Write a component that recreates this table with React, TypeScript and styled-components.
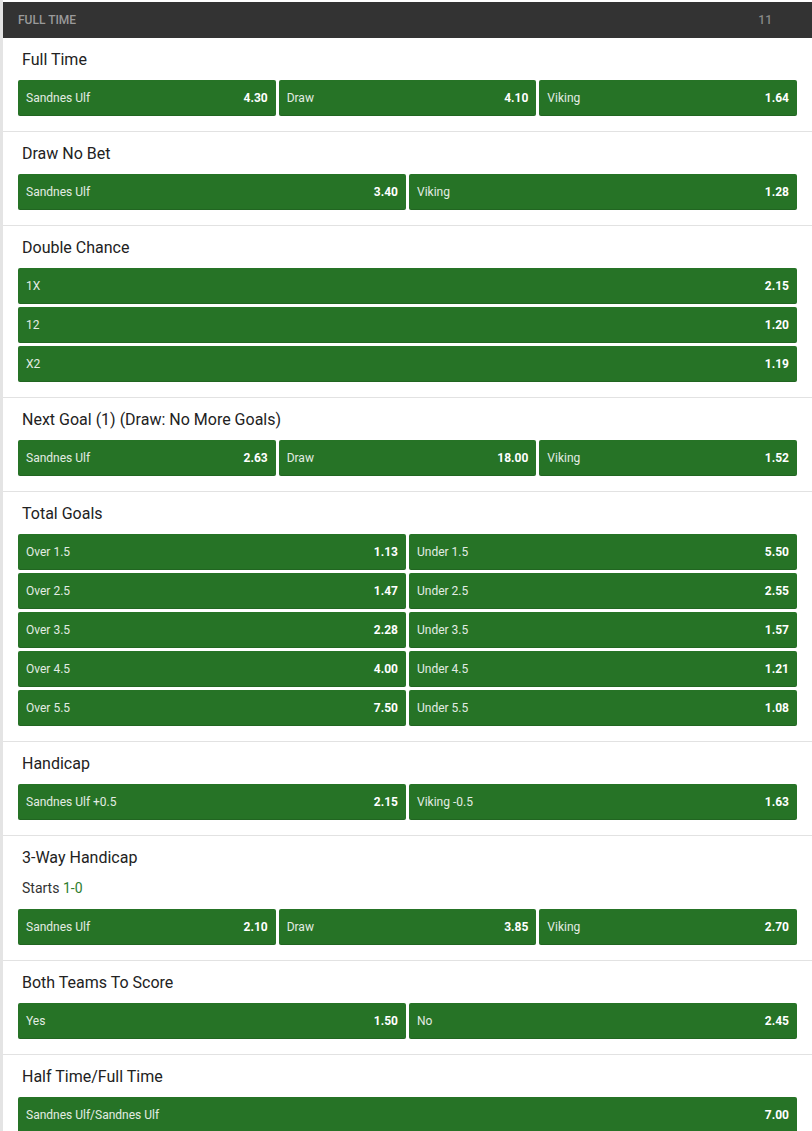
import styled, { createGlobalStyle } from 'styled-components';

type Outcome = { label: string; odds: string };

interface Market {
	title: string;
	note?: { text: string; value: string };
	columns: number;
	outcomes: Outcome[];
}

const markets: Market[] = [
	{
		title: 'Full Time',
		columns: 3,
		outcomes: [
			{ label: 'Sandnes Ulf', odds: '4.30' },
			{ label: 'Draw', odds: '4.10' },
			{ label: 'Viking', odds: '1.64' },
		],
	},
	{
		title: 'Draw No Bet',
		columns: 2,
		outcomes: [
			{ label: 'Sandnes Ulf', odds: '3.40' },
			{ label: 'Viking', odds: '1.28' },
		],
	},
	{
		title: 'Double Chance',
		columns: 1,
		outcomes: [
			{ label: '1X', odds: '2.15' },
			{ label: '12', odds: '1.20' },
			{ label: 'X2', odds: '1.19' },
		],
	},
	{
		title: 'Next Goal (1) (Draw: No More Goals)',
		columns: 3,
		outcomes: [
			{ label: 'Sandnes Ulf', odds: '2.63' },
			{ label: 'Draw', odds: '18.00' },
			{ label: 'Viking', odds: '1.52' },
		],
	},
	{
		title: 'Total Goals',
		columns: 2,
		outcomes: [
			{ label: 'Over 1.5', odds: '1.13' },
			{ label: 'Under 1.5', odds: '5.50' },
			{ label: 'Over 2.5', odds: '1.47' },
			{ label: 'Under 2.5', odds: '2.55' },
			{ label: 'Over 3.5', odds: '2.28' },
			{ label: 'Under 3.5', odds: '1.57' },
			{ label: 'Over 4.5', odds: '4.00' },
			{ label: 'Under 4.5', odds: '1.21' },
			{ label: 'Over 5.5', odds: '7.50' },
			{ label: 'Under 5.5', odds: '1.08' },
		],
	},
	{
		title: 'Handicap',
		columns: 2,
		outcomes: [
			{ label: 'Sandnes Ulf +0.5', odds: '2.15' },
			{ label: 'Viking -0.5', odds: '1.63' },
		],
	},
	{
		title: '3-Way Handicap',
		note: { text: 'Starts', value: '1-0' },
		columns: 3,
		outcomes: [
			{ label: 'Sandnes Ulf', odds: '2.10' },
			{ label: 'Draw', odds: '3.85' },
			{ label: 'Viking', odds: '2.70' },
		],
	},
	{
		title: 'Both Teams To Score',
		columns: 2,
		outcomes: [
			{ label: 'Yes', odds: '1.50' },
			{ label: 'No', odds: '2.45' },
		],
	},
	{
		title: 'Half Time/Full Time',
		columns: 1,
		outcomes: [{ label: 'Sandnes Ulf/Sandnes Ulf', odds: '7.00' }],
	},
];

export default function App() {
	return (
		<>
			<GlobalStyle />
			<Panel>
				<Header>
					<span>Full Time</span>
					<Count>11</Count>
				</Header>
				{markets.map((m) => (
					<MarketSection key={m.title}>
						<MarketTitle>{m.title}</MarketTitle>
						{m.note && (
							<Note>
								{m.note.text} <em>{m.note.value}</em>
							</Note>
						)}
						<OutcomeGrid $columns={m.columns}>
							{m.outcomes.map((o) => (
								<OddsButton key={o.label}>
									<span className="label">{o.label}</span>
									<span className="odds">{o.odds}</span>
								</OddsButton>
							))}
						</OutcomeGrid>
					</MarketSection>
				))}
			</Panel>
		</>
	);
}

const GlobalStyle = createGlobalStyle`
	html, body {
		margin: 0;
		padding: 0;
		background: #ffffff;
		font-family: Roboto, 'Liberation Sans', sans-serif;
	}
`;

const Panel = styled.div`
	padding-top: 2px;
	border-left: 3px solid #e4e4e4;
	background: #fff;
	min-height: 100vh;
`;

const Header = styled.div`
	display: flex;
	align-items: center;
	justify-content: space-between;
	height: 36px;
	padding: 0 40px 0 15px;
	background: #333333;
	color: #9a9a9a;
	font-size: 12px;
	font-weight: 500;
	text-transform: uppercase;
`;

const Count = styled.span`
	color: #888;
	font-size: 12px;
`;

const MarketSection = styled.section`
	padding: 12px 15px 15px;
	border-bottom: 1px solid #e2e2e2;
`;

const MarketTitle = styled.h3`
	margin: 0 0 10px 4px;
	font-size: 16px;
	line-height: 20px;
	font-weight: 400;
	color: #222;
`;

const Note = styled.div`
	margin: 0 0 11px 4px;
	font-size: 14px;
	line-height: 20px;
	color: #333;

	em {
		font-style: normal;
		color: #2e7d2e;
	}
`;

const OutcomeGrid = styled.div<{ $columns: number }>`
	display: grid;
	grid-template-columns: repeat(${(p) => p.$columns}, 1fr);
	gap: 3px;
`;

const OddsButton = styled.button`
	display: flex;
	align-items: center;
	justify-content: space-between;
	height: 36px;
	padding: 0 8px 0 8px;
	border: none;
	border-radius: 2px;
	background: #267326;
	box-shadow: inset 0 -1px 0 rgba(0, 0, 0, 0.12);
	font-family: inherit;
	font-size: 12px;
	cursor: pointer;

	.label {
		color: #e3ece3;
	}

	.odds {
		color: #fff;
		font-weight: 700;
	}
`;
